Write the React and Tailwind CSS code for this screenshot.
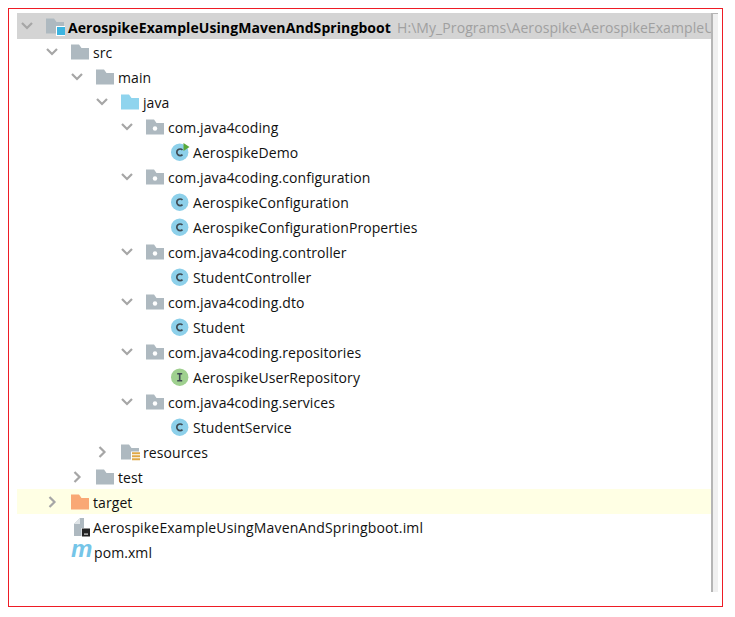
const font = "font-['Open_Sans','Noto_Sans',sans-serif]";

function Chevron({ open }) {
  return (
    <svg width="12" height="12" viewBox="0 0 12 12" className="shrink-0">
      <path
        d={open ? "M1 3l5 5 5-5" : "M3.5 1l5 5-5 5"}
        fill="none"
        stroke="#a6a6a6"
        strokeWidth="2.2"
      />
    </svg>
  );
}

function Folder({ color = "#aeb9c0", dot, children }) {
  return (
    <svg width="22" height="22" viewBox="0 0 22 22" className="shrink-0">
      <path d="M0 3.5h8l2.5 3.5H18v11.5H0z" fill={color} />
      {dot && <circle cx="9" cy="12.5" r="2.2" fill="#fff" />}
      {children}
    </svg>
  );
}

function ModuleIcon() {
  return (
    <Folder>
      <rect x="10" y="11" width="9" height="10" fill="#fff" />
      <rect x="11" y="12" width="8" height="8" fill="#3cb4e0" />
    </Folder>
  );
}

function ResourcesIcon() {
  return (
    <Folder>
      <rect x="10" y="10.5" width="10" height="10.5" fill="#fff" />
      <path d="M11 12.2h8M11 15.2h8M11 18.2h8" stroke="#e0a846" strokeWidth="2" />
    </Folder>
  );
}

function ClassIcon({ letter = "C", color = "#8dd0ea", run }) {
  return (
    <svg width="22" height="22" viewBox="0 0 22 22" className="shrink-0">
      <circle cx="8.7" cy="11.2" r="8.7" fill={color} />
      {letter === "C" ? (
        <path d="M11.5 9a3.3 3.3 0 1 0 0 4.6" fill="none" stroke="#3f4a52" strokeWidth="1.7" />
      ) : (
        <path d="M6.2 7.7h5M6.2 14.7h5M8.7 7.7v7" fill="none" stroke="#3f4a52" strokeWidth="1.6" />
      )}
      {run && <path d="M12.5 2v8l6-4z" fill="#59a83a" />}
    </svg>
  );
}

function ImlIcon() {
  return (
    <svg width="22" height="22" viewBox="0 0 22 22" className="shrink-0">
      <path d="M3 8l6-6h4v18H3z" fill="#aeb9c0" />
      <path d="M3 8l6-6v6z" fill="#dfe4e7" />
      <rect x="10.5" y="12" width="9" height="9" fill="#fff" />
      <rect x="11" y="12.5" width="8" height="8" fill="#222" />
      <rect x="13" y="17.5" width="4" height="1.2" fill="#ddd" />
    </svg>
  );
}

function PomIcon() {
  return (
    <span className="mb-[6px] w-[23px] shrink-0 font-['Liberation_Sans',sans-serif] text-[24px] leading-[19px] font-bold italic text-[#75c5e8]">
      m
    </span>
  );
}

const rows = [
  { d: 0, open: true, icon: <ModuleIcon />, label: "AerospikeExampleUsingMavenAndSpringboot", bold: true, path: "H:\\My_Programs\\Aerospike\\AerospikeExampleUsingMavenAndSpringboot", bg: "bg-[#d4d4d4]", h: "h-[26px]" },
  { d: 1, open: true, icon: <Folder />, label: "src" },
  { d: 2, open: true, icon: <Folder />, label: "main" },
  { d: 3, open: true, icon: <Folder color="#8fd4ee" />, label: "java" },
  { d: 4, open: true, icon: <Folder dot />, label: "com.java4coding" },
  { d: 5, icon: <ClassIcon run />, label: "AerospikeDemo" },
  { d: 4, open: true, icon: <Folder dot />, label: "com.java4coding.configuration" },
  { d: 5, icon: <ClassIcon />, label: "AerospikeConfiguration" },
  { d: 5, icon: <ClassIcon />, label: "AerospikeConfigurationProperties" },
  { d: 4, open: true, icon: <Folder dot />, label: "com.java4coding.controller" },
  { d: 5, icon: <ClassIcon />, label: "StudentController" },
  { d: 4, open: true, icon: <Folder dot />, label: "com.java4coding.dto" },
  { d: 5, icon: <ClassIcon />, label: "Student" },
  { d: 4, open: true, icon: <Folder dot />, label: "com.java4coding.repositories" },
  { d: 5, icon: <ClassIcon letter="I" color="#9fd08f" />, label: "AerospikeUserRepository" },
  { d: 4, open: true, icon: <Folder dot />, label: "com.java4coding.services" },
  { d: 5, icon: <ClassIcon />, label: "StudentService" },
  { d: 3, open: false, icon: <ResourcesIcon />, label: "resources" },
  { d: 2, open: false, icon: <Folder />, label: "test" },
  { d: 1, open: false, icon: <Folder color="#f9a875" />, label: "target", bg: "bg-[#ffffe4]" },
  { d: 1, icon: <ImlIcon />, label: "AerospikeExampleUsingMavenAndSpringboot.iml", wide: true },
  { d: 1, icon: <PomIcon />, label: "pom.xml" },
];

function Row({ row }) {
  return (
    <div
      className={`flex items-center whitespace-nowrap ${row.path ? "overflow-hidden" : ""} ${row.h || "h-[25px]"} ${row.bg || ""}`}
      style={{ paddingLeft: row.d * 25 }}
    >
      <span className="flex w-[29px] shrink-0 pl-[4px]">
        {row.open !== undefined && <Chevron open={row.open} />}
      </span>
      {row.icon}
      <span className={`pt-[2px] text-[14px] ${row.wide ? "tracking-[0.17px]" : "tracking-[0.08px]"} ${row.bold ? "font-bold text-black" : "text-[#111]"}`}>
        {row.label}
      </span>
      {row.path && <span className="ml-[6px] pt-[2px] text-[14px] tracking-[0.08px] text-[#a0a0a0]">{row.path}</span>}
    </div>
  );
}

export default function App() {
  return (
    <div className={`h-[617px] w-[735px] overflow-hidden bg-white pt-2 pl-2 ${font}`}>
      <div className="flex h-[599px] w-[715px] border border-[#ee1c25] pt-1 pl-2">
        <div className="w-[694px] min-w-0">
          {rows.map((r) => (
            <Row key={r.label} row={r} />
          ))}
        </div>
        <div className="h-[579px] w-[7px] border-t border-l-2 border-[#b5b5b5] bg-[#f0f0f0]" />
      </div>
    </div>
  );
}
